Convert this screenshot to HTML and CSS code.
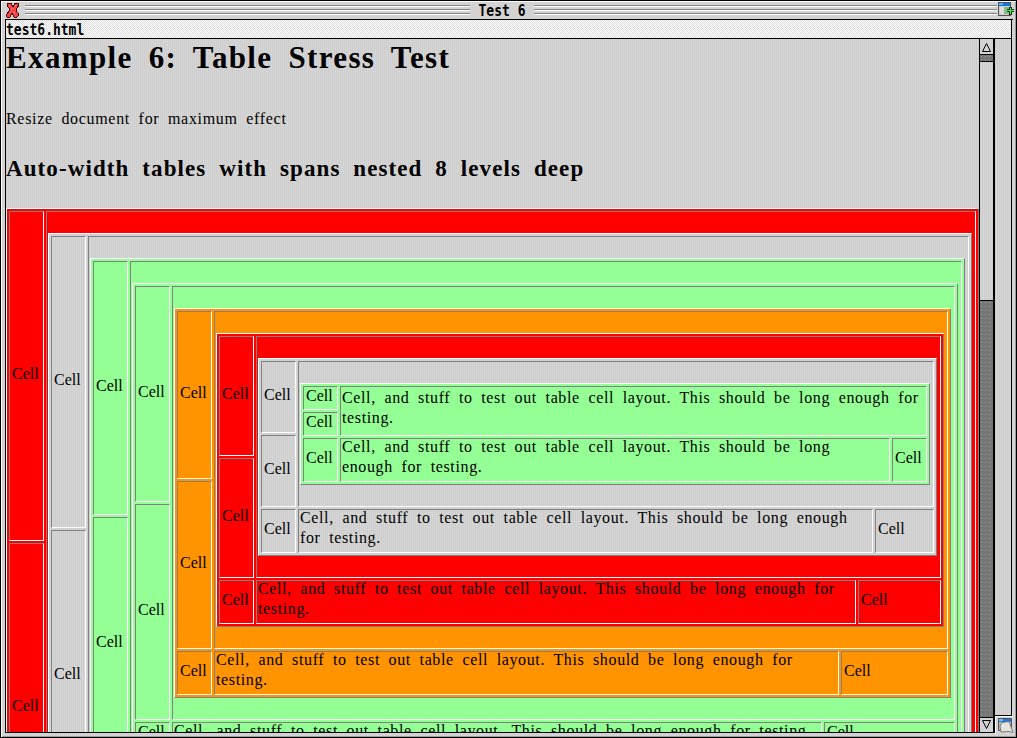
FILE: index.html
```html
<!DOCTYPE html>
<html lang="en">
<head>
<meta charset="utf-8">
<title>Test 6</title>
<link rel="stylesheet" href="styles.css">
</head>
<body>
<div class="window">
  <header class="titlebar">
    <svg class="close" width="15" height="16" viewBox="0 0 15 16" shape-rendering="crispEdges"><path d="M3 1h3l2 4 2-4h3l1 2-3 5 3 5-2 2H9l-2-4-2 4H2l-1-2 4-5-3-5z" fill="#f54343" stroke="#4a0808" stroke-width="1"/><path d="M4 3l6 9M11 3L4 13" stroke="#ff7272" stroke-width="1" stroke-dasharray="2 2"/></svg>
    <span class="lines"></span>
    <span class="title sys">Test 6</span>
    <span class="lines"></span>
    <svg class="toggle" width="17" height="16" viewBox="0 0 17 16" shape-rendering="crispEdges"><path d="M.5.500h12v13H.5z" fill="#ccc" stroke="#555"/><path d="M1 1h11v3H1z" fill="#1674dc"/><path d="M1 1h4v2H1z" fill="#5bb4f4"/><path d="M6 5h5v7H6z" fill="#8b8"/><path d="M2 5h4v7H2z" fill="#ddd"/><path d="M11 5h3v2h2v3h-2v3h-3v-3H9V7h2z" fill="#143c14"/><path d="M12 6h1v2h3v1h-3v3h-1V9H9V8h3z" fill="#5de35d"/></svg>
  </header>
  <div class="frame">
    <div class="urlbar"><span class="sys">test6.html</span></div>
    <div class="panes">
      <main class="page">
        <h1>Example 6: Table Stress Test</h1>
        <p class="intro">Resize document for maximum effect</p>
        <h2>Auto-width tables with spans nested 8 levels deep</h2>
        <div class="table l1 red">
          <div class="cell">Cell</div>
          <div class="cell nest">
            <div class="table l2 grey">
              <div class="cell">Cell</div>
              <div class="cell nest">
                <div class="table l3 green">
                  <div class="cell">Cell</div>
                  <div class="cell nest">
                    <div class="table l4 green">
                      <div class="cell">Cell</div>
                      <div class="cell nest">
                        <div class="table l5 orange">
                          <div class="cell">Cell</div>
                          <div class="cell nest">
                            <div class="table l6 red">
                              <div class="cell">Cell</div>
                              <div class="cell nest">
                                <div class="table l7 grey">
                                  <div class="cell">Cell</div>
                                  <div class="cell nest">
                                    <div class="table l8 green">
                                      <div class="cell">Cell</div>
                                      <div class="cell nest text"><p>Cell, and stuff to test out table cell layout. This should be long enough for<br>testing.</p></div>
                                      <div class="cell">Cell</div>
                                      <div class="cell">Cell</div>
                                      <div class="cell text"><p>Cell, and stuff to test out table cell layout. This should be long<br>enough for testing.</p></div>
                                      <div class="cell">Cell</div>
                                    </div>
                                  </div>
                                  <div class="cell">Cell</div>
                                  <div class="cell">Cell</div>
                                  <div class="cell text"><p>Cell, and stuff to test out table cell layout. This should be long enough<br>for testing.</p></div>
                                  <div class="cell">Cell</div>
                                </div>
                              </div>
                              <div class="cell">Cell</div>
                              <div class="cell">Cell</div>
                              <div class="cell text"><p>Cell, and stuff to test out table cell layout. This should be long enough for<br>testing.</p></div>
                              <div class="cell">Cell</div>
                            </div>
                          </div>
                          <div class="cell">Cell</div>
                          <div class="cell">Cell</div>
                          <div class="cell text"><p>Cell, and stuff to test out table cell layout. This should be long enough for<br>testing.</p></div>
                          <div class="cell">Cell</div>
                        </div>
                      </div>
                      <div class="cell">Cell</div>
                      <div class="cell">Cell</div>
                      <div class="cell text"><p>Cell, and stuff to test out table cell layout. This should be long enough for testing.</p></div>
                      <div class="cell">Cell</div>
                    </div>
                  </div>
                  <div class="cell">Cell</div>
                </div>
              </div>
              <div class="cell">Cell</div>
            </div>
          </div>
          <div class="cell">Cell</div>
        </div>
      </main>
      <div class="scrollbar">
        <div class="arrow"><svg width="13" height="14" viewBox="0 0 13 14"><path d="M6.500 3.500l-4 8h8z" fill="none" stroke="#000"/></svg></div>
        <div class="well top"></div>
        <div class="slider"></div>
        <div class="well rest"></div>
        <div class="arrow down"><svg width="13" height="14" viewBox="0 0 13 14"><path d="M6.500 10.500l-4-8h8z" fill="none" stroke="#000"/></svg></div>
      </div>
      <div class="side">
        <div class="gutter"></div>
        <div class="resize"><svg width="16" height="16" viewBox="0 0 16 16"><path d="M.5.500h13v12H.5z" fill="#bbb" stroke="#555"/><path d="M1 1h12v3H1z" fill="#2374e6"/><path d="M1 1h4v2H1z" fill="#6bc5f5"/><path d="M4 4.500l7-1 3 8 1 3-4-1-8 .5-1-6z" fill="#e4e4dc" stroke="#777"/></svg></div>
      </div>
    </div>
  </div>
</div>
</body>
</html>
```
FILE: styles.css
```css
* { box-sizing: border-box; }
body { margin: 0; overflow: hidden; }
svg { display: block; }

.window {
  width: 1017px;
  height: 738px;
  display: flex;
  flex-direction: column;
  padding: 0 3px 4px;
  border: 1px solid #000;
  background: #d3d3d3;
  box-shadow: inset 1px 1px #fff, inset -1px -1px #999;
}
.titlebar {
  height: 18px;
  flex: none;
  display: flex;
  align-items: flex-start;
  margin-right: -3px;
  padding: 1px 0 0 1px;
}
.close { margin-right: 5px; flex: none; }
.lines {
  flex: none;
  width: 445px;
  height: 12px;
  margin-top: 3px;
  background: repeating-linear-gradient(#858585 0 1px, #fff 1px 2px, #d3d3d3 2px 4px);
}
.title { width: 64px; padding-top: 1px; text-align: center; }
.titlebar .lines:nth-of-type(3) { width: 463px; }
.toggle { margin-left: 1px; flex: none; }
.sys {
  font: bold 13px/16px "DejaVu Sans Mono", monospace;
  transform: scaleY(1.2);
  white-space: pre;
}

.frame {
  flex: 1;
  min-height: 0;
  display: flex;
  flex-direction: column;
  margin: 0 0 0 1px;
  border-top: 1px solid #000;
  border-left: 1px solid #000;
}
.urlbar {
  height: 19px;
  flex: none;
  width: 1006px;
  border-right: 1px solid #000;
  border-bottom: 1px solid #000;
  background: repeating-conic-gradient(#fff 0 25%, #dcdcdc 0 50%) 0 0 / 2px 2px;
}
.urlbar .sys { display: block; width: 100px; margin: 2px 0 0; height: 16px; }
.panes { flex: 1; min-height: 0; display: flex; }

.page {
  width: 973px;
  overflow: hidden;
  border-bottom: 1px solid #000;
  background: repeating-linear-gradient(90deg, #cdcdcd 0 1px, #d6d6d6 1px 2px);
  color: #000;
  font: 16px/20px "Liberation Serif", serif;
  word-spacing: 4px;
  white-space: nowrap;
}
h1, h2, p { margin: 0; }
h1 { font-size: 31px; line-height: 38px; height: 70px; letter-spacing: 1.35px; word-spacing: 7px; }
p { letter-spacing: .63px; }
.intro { height: 44px; letter-spacing: .68px; }
h2 { font-size: 23px; line-height: 32px; height: 55px; letter-spacing: 1.1px; word-spacing: 6px; }

.table {
  display: grid;
  grid-template-rows: var(--a) var(--a) var(--b);
  grid-template-columns: 35px 1fr var(--w);
  gap: 2px;
  padding: 2px;
  border: 1px solid;
  border-color: #fff #808080 #808080 #fff;
}
.red { background-color: #f00; }
.green { background-color: #94ff94; }
.orange { background-color: #ff9400; }
.grey { background: repeating-linear-gradient(90deg, #cdcdcd 0 1px, #d6d6d6 1px 2px); }
.cell {
  display: flex;
  align-items: center;
  padding: 0 1px 5px 2px;
  border: 1px solid;
  border-color: #808080 #fff #fff #808080;
}
.text { display: block; padding: 0 0 0 1px; }
.text p { margin-top: -2px; }
.cell.nest { grid-column: 2 / 4; grid-row: 1 / 3; display: block; padding: 21px 3px 0 1px; }
.l8 > .cell.nest { padding: 3px 0 0 1px; }
.table > .cell:nth-child(3) { grid-row: 2; grid-column: 1; }
.l1 { --a: 330px; --b: 24px; --w: 209px; }
.l2 { --a: 292px; --b: 24px; --w: 183px; }
.l3 { --a: 254px; --b: 24px; --w: 157px; }
.l4 { --a: 216px; --b: 24px; --w: 131px; }
.l5 { --a: 168px; --b: 44px; --w: 107px; }
.l6 { --a: 120px; --b: 44px; --w: 83px; }
.l7 { --a: 72px; --b: 44px; --w: 59px; }
.l8 { --a: 24px; --b: 44px; --w: 35px; }

.scrollbar {
  width: 16px;
  display: flex;
  flex-direction: column;
  border: solid #000;
  border-width: 1px 2px 1px 1px;
  margin-top: -1px;
}
.arrow { height: 16px; padding-top: 1px; border-bottom: 1px solid #000; background: #d3d3d3; }
.arrow.down { height: 15px; padding-top: 0; border-bottom: 0; border-top: 1px solid #000; }
.well { background: radial-gradient(circle at 1.5px 1.5px, #a0a0a0 .8px, transparent .9px) 0 0 / 4px 4px #767676; }
.top { height: 6px; }
.slider {
  height: 240px;
  border: solid #000;
  border-width: 1px 0;
  background: repeating-linear-gradient(90deg, #cdcdcd 0 1px, #d6d6d6 1px 2px);
}
.rest { flex: 1; }
.side { width: 18px; display: flex; flex-direction: column; }
.gutter {
  width: 17px;
  height: 677px;
  flex: none;
  border: solid #000;
  border-width: 0 1px 1px 0;
  background: repeating-linear-gradient(90deg, #cdcdcd 0 1px, #d6d6d6 1px 2px);
}
.resize { flex: none; padding: 1px 0 0 2px; border-top: 1px solid #fff; border-left: 1px solid #fff; height: 19px; }
```
